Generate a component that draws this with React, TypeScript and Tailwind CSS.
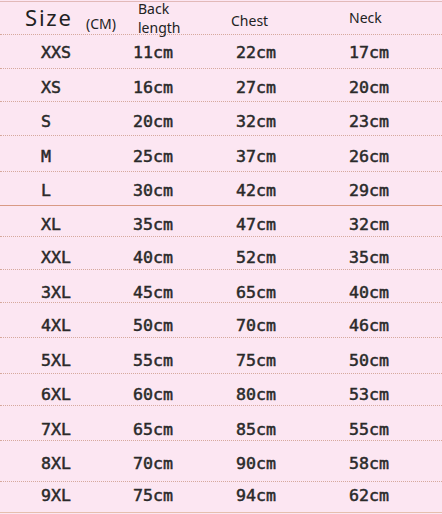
import React from "react";

const rows = [
  { s: "XXS", b: "11cm", c: "22cm", n: "17cm", cls: "h-[34px] pt-[10px] border-dotted border-[#d6a99d]" },
  { s: "XS", b: "16cm", c: "27cm", n: "20cm", cls: "h-[33px] pt-[11px] border-dotted border-[#d6a99d]" },
  { s: "S", b: "20cm", c: "32cm", n: "23cm", cls: "h-[34px] pt-[12px] border-dotted border-[#d6a99d]" },
  { s: "M", b: "25cm", c: "37cm", n: "26cm", cls: "h-[36px] pt-[13px] border-dotted border-[#d6a99d]" },
  { s: "L", b: "30cm", c: "42cm", n: "29cm", cls: "h-[34px] pt-[11px] border-solid border-[#d99a85]" },
  { s: "XL", b: "35cm", c: "47cm", n: "32cm", cls: "h-[31px] pt-[11px] border-dotted border-[#d6a99d]" },
  { s: "XXL", b: "40cm", c: "52cm", n: "35cm", cls: "h-[33px] pt-[13px] border-dotted border-[#d6a99d]" },
  { s: "3XL", b: "45cm", c: "65cm", n: "40cm", cls: "h-[33px] pt-[15px] border-dotted border-[#d6a99d]" },
  { s: "4XL", b: "50cm", c: "70cm", n: "46cm", cls: "h-[35px] pt-[15px] border-dotted border-[#d6a99d]" },
  { s: "5XL", b: "55cm", c: "75cm", n: "50cm", cls: "h-[36px] pt-[15px] border-dotted border-[#d6a99d]" },
  { s: "6XL", b: "60cm", c: "80cm", n: "53cm", cls: "h-[32px] pt-[13px] border-dotted border-[#d6a99d]" },
  { s: "7XL", b: "65cm", c: "85cm", n: "55cm", cls: "h-[35px] pt-[16px] border-dotted border-[#d6a99d]" },
  { s: "8XL", b: "70cm", c: "90cm", n: "58cm", cls: "h-[41px] pt-[15px] border-dotted border-[#d6a99d]" },
  { s: "9XL", b: "75cm", c: "94cm", n: "62cm", cls: "h-[31px] pt-[6px] border-solid border-[#e6bfae]" },
];

export default function App() {
  return (
    <div className="w-[442px] h-[514px] bg-[#fce6f2] overflow-hidden">
      <div className="h-[2px] border-b border-[#e2b9b9]" />
      <div
        className="h-[33px] border-b border-dotted border-[#d6a99d] flex text-[#222] relative"
        style={{ fontFamily: '"Noto Sans", "Open Sans", sans-serif' }}
      >
        <div className="w-[86px] pl-[25px] pt-[4px] text-[22px] leading-[22px] tracking-[1.8px]">Size</div>
        <div className="w-[52px] pt-[15px] text-[14px] leading-[14px]">(CM)</div>
        <div className="w-[93px] -mt-[3px] text-[14px] leading-[19px]">
          <div>Back</div>
          <div>length</div>
        </div>
        <div className="w-[118px] pt-[12px] text-[14px] leading-[14px]">Chest</div>
        <div className="pt-[9px] text-[14px] leading-[14px]">Neck</div>
      </div>
      {rows.map((r) => (
        <div
          key={r.s}
          className={`box-border border-b grid grid-cols-[92px_103px_113px_1fr] pl-[41px] text-[16.6px] leading-[16px] text-[#2a2a2a] ${r.cls}`}
          style={{ fontFamily: '"DejaVu Sans Mono", monospace', WebkitTextStroke: "0.5px #2a2a2a" }}
        >
          <div>{r.s}</div>
          <div>{r.b}</div>
          <div>{r.c}</div>
          <div>{r.n}</div>
        </div>
      ))}
    </div>
  );
}
